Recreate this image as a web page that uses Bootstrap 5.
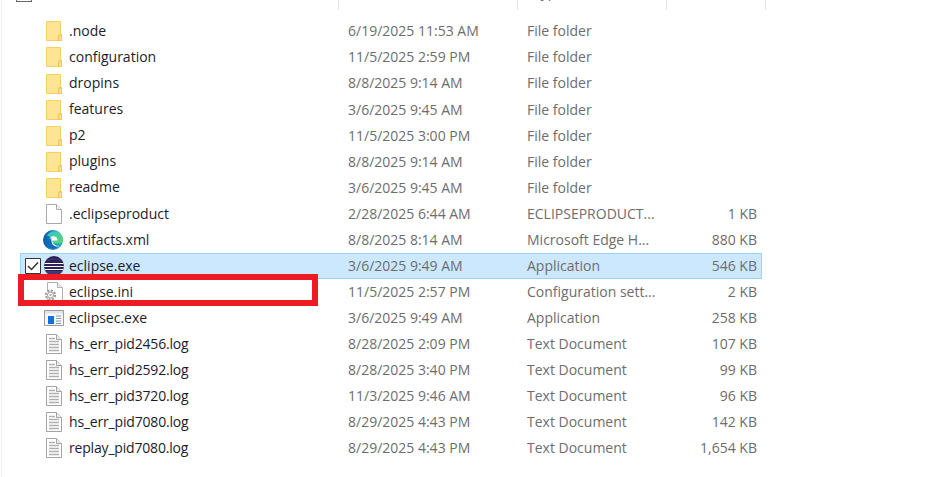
<!DOCTYPE html>
<html lang="en"><head><meta charset="utf-8"><title>Explorer</title>
<link href="https://cdn.jsdelivr.net/npm/bootstrap@5.3.0/dist/css/bootstrap.min.css" rel="stylesheet">
<style>
html,body{height:477px;overflow:hidden;background:#fff}
body{font-family:"Open Sans","Noto Sans","Liberation Sans",sans-serif;font-size:14px;color:#1c1c2a;position:relative}
.edge{position:absolute;left:1px;top:0;bottom:0;width:1px;background:#f0f0f0}
.hdr{height:18.4px;padding-left:16px}
.hdr-cols{height:10px;left:20px}
.hdr-box{width:16px;height:2px;border:1px solid #666;border-top:0;background:#fff}
.hc{border-right:1px solid #e5e5e5;height:10px;overflow:hidden}
.hc-last{width:99px;flex:none}
.hc-type{display:block;margin-top:-18px;padding-left:7px;line-height:20px;color:#6d6d6d}
.c0{width:319px;flex:none}
.c1{width:179px;flex:none;padding-left:8px}
.c2{width:149px;flex:none;padding-left:8px}
.c3{width:95px;flex:none;text-align:right;padding-right:6px}
.rw{height:26.06px;line-height:24.5px;margin-left:20px;width:742px;color:#6d6d6d;white-space:nowrap;border:1px solid transparent}
.rw.sel{background:#cce8ff;border-color:#99d1ff}
.nm{color:#1c1c2a;display:flex;align-items:center;height:100%;position:relative;padding-left:23px}
.ic{position:absolute;left:25px;top:50%;transform:translateY(-50%);display:block}
.ic-wide{left:23px}
.ic-edge{left:22px}
.tick{position:absolute;left:4px;top:50%;transform:translateY(-50%);display:block}
.nm span{margin-left:25px}
.nm span.tight{letter-spacing:-.18px}
.redbox{position:absolute;left:18px;top:274px;width:300px;height:32px;border:6px solid #ed1c24;z-index:2}
</style></head>
<body>
<svg width="0" height="0" class="d-block position-absolute">
<defs>
<symbol id="fold" viewBox="0 0 16 20"><path d="M.5.500h14v19H.5z" fill="#ffe48f" stroke="#f4d063"/><path d="M1 1h13v18H1z" fill="#fde594"/><path d="M14 13h2v7h-4v-5q0-2 2-2z" fill="#f0c95a"/><path d="M13.500 14.500h1.500V19h-1.500z" fill="#fde594"/></symbol>
<symbol id="doc" viewBox="0 0 16 20"><path d="M.5.500h10l5 5v14H.5z" fill="#fff" stroke="#a9a9a9"/><path d="M10.500.500v5h5" fill="#f2f2f2" stroke="#a9a9a9"/></symbol>
<symbol id="log" viewBox="0 0 16 20"><path d="M.5.500h10l5 5v14H.5z" fill="#fff" stroke="#a3a3a3"/><path d="M10.500.500v5h5" fill="#eee" stroke="#a3a3a3"/><path d="M3 4.500h6M3 7.500h10M3 10.500h10M3 13.500h10M3 16.500h10" stroke="#b0b0b0" stroke-width="1.500"/></symbol>
<symbol id="edge" viewBox="0 0 20 20"><defs><linearGradient id="eg" x1="0" y1="0" x2="1" y2="0"><stop offset="0" stop-color="#0c59a4"/><stop offset="1" stop-color="#1fb8d8"/></linearGradient><linearGradient id="eh" x1="0" y1="0" x2="1" y2="1"><stop offset="0" stop-color="#2fc2e0"/><stop offset="1" stop-color="#5fd95f"/></linearGradient></defs><circle cx="10" cy="10" r="10" fill="url(#eg)"/><path d="M4 6C6 1 15-1 18.500 5c2.500 4 1.500 8-2 8.500H11c-1.500 0-2.500-1-1.500-3C7.500 6.500 5.500 6 4 6z" fill="url(#eh)"/><path d="M6.500 10c0-3 3-4.500 5.500-3.500 2 1 2.500 2.500 2.500 4h-5c-.5 2 1 5 6.500 5.500C13 20 6.500 17 6.500 10z" fill="#fff" opacity=".95"/><path d="M8.500 11c0 3.500 3 6 7 5.500-4 4-11 2-11-4 0-2 2-4 4-4.500-.5 1-.5 2 0 3z" fill="#0c6ab8"/></symbol>
<symbol id="ecl" viewBox="0 0 20 20"><circle cx="10" cy="10" r="10" fill="#2c2255"/><path d="M.5 7.500h19M.2 10.500h19.600M.8 13.500h18.400" stroke="#fff" stroke-width="1.100"/><path d="M3 5Q10 1 17 5" stroke="#443a75" fill="none"/><path d="M1 15h18q-3 5-9 5t-9-5z" fill="#5f4a9b" opacity=".5"/></symbol>
<symbol id="ini" viewBox="0 0 20 20"><path d="M4.500.5h10l5 5v14h-15z" fill="#fff" stroke="#b0b0b0"/><path d="M14.500.5v5h5" fill="#eee" stroke="#b0b0b0"/><circle cx="7.500" cy="13" r="4.500" fill="#fff" stroke="#9a9a9a" stroke-width="2.200" stroke-dasharray="2 1.500"/><circle cx="7.500" cy="13" r="3" fill="#fff" stroke="#9c9c9c"/><circle cx="7.500" cy="13" r="1.300" fill="#bbb"/></symbol>
<symbol id="app" viewBox="0 0 20 16"><path d="M.5.500h19v15H.5z" fill="#f7f7f7" stroke="#9a9ba1"/><path d="M1 1h18v2.500H1z" fill="#dfe3e8"/><path d="M4 6h6v8H4z" fill="#1272d4"/><path d="M12 6h5M12 8.500h5M12 11h5M12 13.500h5" stroke="#8d98a6"/></symbol>
</defs></svg>
<div class="edge"></div>
<div class="hdr"><div class="hdr-box"></div></div>
<div class="position-absolute top-0 d-flex hdr-cols">
<div class="hc c0"></div><div class="hc c1"></div><div class="hc c2"><span class="hc-type">Type</span></div><div class="hc hc-last"></div>
</div>
<main>
<div class="rw d-flex"><div class="c0 nm"><svg class="ic" width="16" height="20"><use href="#fold"/></svg><span>.node</span></div><div class="c1">6/19/2025 11:53 AM</div><div class="c2">File folder</div><div class="c3"></div></div>
<div class="rw d-flex"><div class="c0 nm"><svg class="ic" width="16" height="20"><use href="#fold"/></svg><span>configuration</span></div><div class="c1">11/5/2025 2:59 PM</div><div class="c2">File folder</div><div class="c3"></div></div>
<div class="rw d-flex"><div class="c0 nm"><svg class="ic" width="16" height="20"><use href="#fold"/></svg><span>dropins</span></div><div class="c1">8/8/2025 9:14 AM</div><div class="c2">File folder</div><div class="c3"></div></div>
<div class="rw d-flex"><div class="c0 nm"><svg class="ic" width="16" height="20"><use href="#fold"/></svg><span>features</span></div><div class="c1">3/6/2025 9:45 AM</div><div class="c2">File folder</div><div class="c3"></div></div>
<div class="rw d-flex"><div class="c0 nm"><svg class="ic" width="16" height="20"><use href="#fold"/></svg><span>p2</span></div><div class="c1">11/5/2025 3:00 PM</div><div class="c2">File folder</div><div class="c3"></div></div>
<div class="rw d-flex"><div class="c0 nm"><svg class="ic" width="16" height="20"><use href="#fold"/></svg><span>plugins</span></div><div class="c1">8/8/2025 9:14 AM</div><div class="c2">File folder</div><div class="c3"></div></div>
<div class="rw d-flex"><div class="c0 nm"><svg class="ic" width="16" height="20"><use href="#fold"/></svg><span>readme</span></div><div class="c1">3/6/2025 9:45 AM</div><div class="c2">File folder</div><div class="c3"></div></div>
<div class="rw d-flex"><div class="c0 nm"><svg class="ic" width="16" height="20"><use href="#doc"/></svg><span>.eclipseproduct</span></div><div class="c1">2/28/2025 6:44 AM</div><div class="c2">ECLIPSEPRODUCT...</div><div class="c3">1 KB</div></div>
<div class="rw d-flex"><div class="c0 nm"><svg class="ic ic-edge" width="20" height="20"><use href="#edge"/></svg><span>artifacts.xml</span></div><div class="c1">8/8/2025 8:14 AM</div><div class="c2">Microsoft Edge H...</div><div class="c3">880 KB</div></div>
<div class="rw d-flex sel"><div class="c0 nm"><svg class="tick" width="16" height="16" viewBox="0 0 16 16"><path d="M.5.500h15v15H.5z" fill="#fff" stroke="#333"/><path d="M3 8l3.500 3.500L13 4.500" fill="none" stroke="#333" stroke-width="1.500"/></svg><svg class="ic ic-wide" width="20" height="20"><use href="#ecl"/></svg><span>eclipse.exe</span></div><div class="c1">3/6/2025 9:49 AM</div><div class="c2">Application</div><div class="c3">546 KB</div></div>
<div class="rw d-flex"><div class="c0 nm"><svg class="ic ic-edge" width="20" height="20"><use href="#ini"/></svg><span>eclipse.ini</span></div><div class="c1">11/5/2025 2:57 PM</div><div class="c2">Configuration sett...</div><div class="c3">2 KB</div></div>
<div class="rw d-flex"><div class="c0 nm"><svg class="ic ic-wide" width="20" height="16"><use href="#app"/></svg><span>eclipsec.exe</span></div><div class="c1">3/6/2025 9:49 AM</div><div class="c2">Application</div><div class="c3">258 KB</div></div>
<div class="rw d-flex"><div class="c0 nm"><svg class="ic" width="16" height="20"><use href="#log"/></svg><span class="tight">hs_err_pid2456.log</span></div><div class="c1">8/28/2025 2:09 PM</div><div class="c2">Text Document</div><div class="c3">107 KB</div></div>
<div class="rw d-flex"><div class="c0 nm"><svg class="ic" width="16" height="20"><use href="#log"/></svg><span class="tight">hs_err_pid2592.log</span></div><div class="c1">8/28/2025 3:40 PM</div><div class="c2">Text Document</div><div class="c3">99 KB</div></div>
<div class="rw d-flex"><div class="c0 nm"><svg class="ic" width="16" height="20"><use href="#log"/></svg><span class="tight">hs_err_pid3720.log</span></div><div class="c1">11/3/2025 9:46 AM</div><div class="c2">Text Document</div><div class="c3">96 KB</div></div>
<div class="rw d-flex"><div class="c0 nm"><svg class="ic" width="16" height="20"><use href="#log"/></svg><span class="tight">hs_err_pid7080.log</span></div><div class="c1">8/29/2025 4:43 PM</div><div class="c2">Text Document</div><div class="c3">142 KB</div></div>
<div class="rw d-flex"><div class="c0 nm"><svg class="ic" width="16" height="20"><use href="#log"/></svg><span class="tight">replay_pid7080.log</span></div><div class="c1">8/29/2025 4:43 PM</div><div class="c2">Text Document</div><div class="c3">1,654 KB</div></div>
</main>
<div class="redbox"></div>
</body></html>
